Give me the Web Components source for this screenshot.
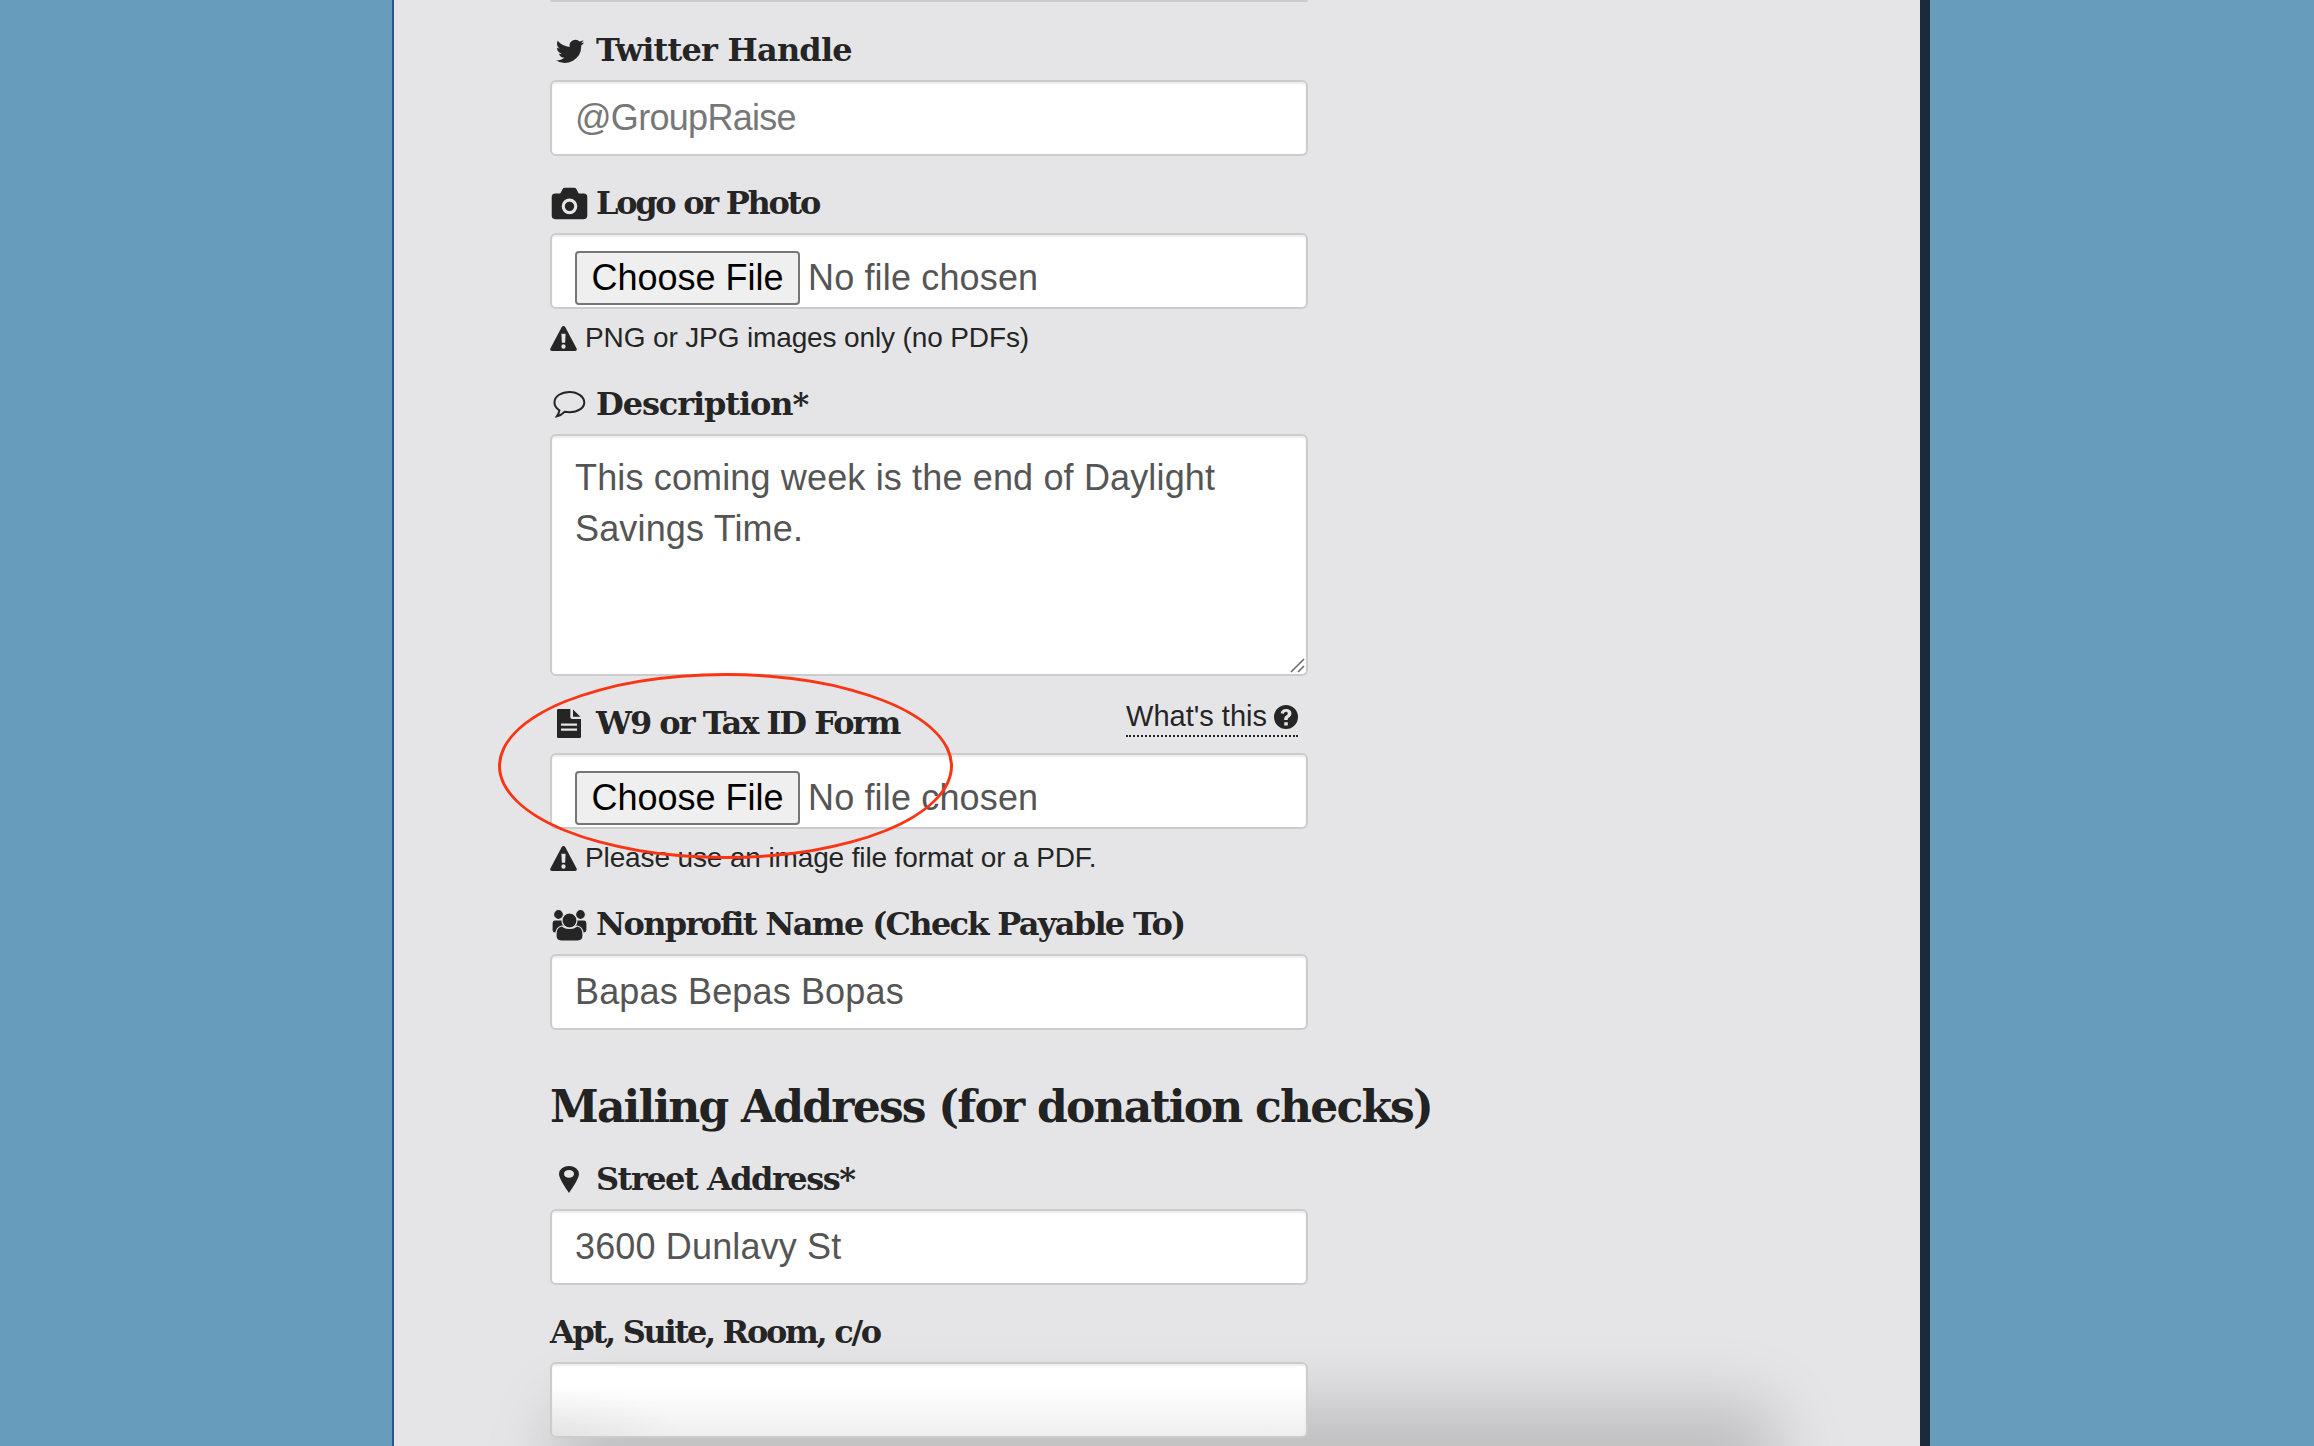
<!DOCTYPE html>
<html>
<head>
<meta charset="utf-8">
<style>
	html, body { margin: 0; height: 100%; overflow: hidden; background: #689cbd; }
</style>
</head>
<body>
<page-shell>
	<form-stub></form-stub>
	<form-field icon="twitter" track="-.8" label="Twitter Handle"><text-box placeholder="@GroupRaise"></text-box></form-field>
	<form-field icon="camera" track="-2.3" label="Logo or Photo" note="PNG or JPG images only (no PDFs)"><file-box></file-box></form-field>
	<form-field icon="comment" track="-1.1" label="Description*"><area-box value="This coming week is the end of Daylight Savings Time."></area-box></form-field>
	<form-field icon="file" track="-2" label="W9 or Tax ID Form" help="What's this" note="Please use an image file format or a PDF."><file-box></file-box></form-field>
	<form-field icon="group" track="-1.7" label="Nonprofit Name (Check Payable To)"><text-box value="Bapas Bepas Bopas"></text-box></form-field>
	<section-title>Mailing Address (for donation checks)</section-title>
	<form-field icon="pin" track="-1.5" label="Street Address*"><text-box value="3600 Dunlavy St"></text-box></form-field>
	<form-field track="-2.3" label="Apt, Suite, Room, c/o"><text-box shaded></text-box></form-field>
</page-shell>

<script>
{
	const ICONS = {
		twitter: `<svg viewBox="0 0 24 22" width="31" height="28"><path fill="#252525" d="M23.500 4.300c-.8.4-1.700.6-2.600.7.900-.6 1.700-1.400 2-2.500-.9.500-1.900.9-2.900 1.100A4.600 4.600 0 0 0 12.200 7.800C8.400 7.600 5 5.800 2.800 3c-1.200 2.100-.6 4.800 1.400 6.100-.7 0-1.400-.2-2.100-.6 0 2.200 1.600 4.100 3.700 4.600-.7.200-1.400.2-2.100.1.600 1.900 2.300 3.200 4.300 3.200A9.300 9.300 0 0 1 1.200 18.300 13 13 0 0 0 21.200 6.700c.9-.6 1.700-1.500 2.300-2.400z"/></svg>`,
		camera: `<svg viewBox="0 0 26 24" width="37" height="35"><path fill="#252525" fill-rule="evenodd" d="M3 5h3.500l1.700-3.200Q8.700 1 9.600 1h6.800q.9 0 1.400.8L19.500 5H23a2.500 2.500 0 0 1 2.500 2.500v13A2.500 2.500 0 0 1 23 23H3a2.500 2.500 0 0 1-2.500-2.500v-13A2.500 2.500 0 0 1 3 5zm10 3.500a5.500 5.500 0 1 0 0 11 5.500 5.500 0 0 0 0-11zm0 2.200a3.300 3.300 0 1 1 0 6.600 3.300 3.300 0 0 1 0-6.600z"/></svg>`,
		comment: `<svg viewBox="0 0 24 22" width="36" height="32"><path fill="none" stroke="#252525" stroke-width="1.400" d="M12.500 2C7 2 2 4.800 2 9.300c0 2.300 1.400 4.100 3.400 5.400-.2 1.500-1 3-1.700 4 2-.4 3.900-1.600 5.200-3 1.200.2 2.400.3 3.600.3 5.500 0 10-2.900 10-6.700S18 2 12.500 2z"/></svg>`,
		file: `<svg viewBox="1 1 18 26" width="24" height="29" preserveAspectRatio="none"><path fill="#252525" fill-rule="evenodd" d="M2 1h9v7.500a1.500 1.500 0 0 0 1.500 1.500H19v16a1 1 0 0 1-1 1H2a1 1 0 0 1-1-1V2a1 1 0 0 1 1-1zm11 .5L18.500 8H13zM4 14v2h12v-2zm0 4.500v2h12v-2z"/></svg>`,
		group: `<svg viewBox="0 0 35 32" width="35" height="32"><g fill="#252525" stroke="#e5e5e7" stroke-width="1.200"><circle cx="6.500" cy="5.500" r="5"/><circle cx="28.500" cy="5.500" r="5"/><path d="M3 11h8l2 8-8 5H3Q0 24 0 21v-6q0-4 3-4zM32 11h-8l-2 8 8 5h2q3 0 3-3v-6q0-4-3-4z"/><circle cx="17.500" cy="11.500" r="7.500"/><path d="M4 25q0-7 6-8 3 2.500 7.500 2.500T25 17q6 1 6 8v2q0 5-5 5H9q-5 0-5-5z"/></g></svg>`,
		pin: `<svg viewBox="1 1 14 24" width="20" height="27" preserveAspectRatio="none"><path fill="#252525" fill-rule="evenodd" d="M8 1a7 7 0 0 1 7 7c0 4-4.500 12-7 17C5.500 20 1 12 1 8a7 7 0 0 1 7-7zm0 3.500a3.500 3.500 0 1 0 0 7 3.500 3.500 0 0 0 0-7z"/></svg>`,
		warning: `<svg viewBox="0 0 28 24" width="27" height="25" preserveAspectRatio="none"><path fill="#252525" fill-rule="evenodd" d="M14 0c.8 0 1.400.4 1.800 1l11.800 20.500c.7 1.200-.2 2.500-1.600 2.500H2c-1.400 0-2.300-1.300-1.600-2.500L12.200 1c.4-.6 1-1 1.800-1zm-2.200 7.500.5 8.500h3.400l.5-8.500zM14 17.500a2.200 2.200 0 1 0 0 4.400 2.200 2.200 0 0 0 0-4.400z"/></svg>`,
		help: `<svg viewBox="0 0 24 24" width="24" height="24"><path fill="#252525" fill-rule="evenodd" d="M12 0a12 12 0 1 1 0 24 12 12 0 0 1 0-24zm-1.800 17.200v3.200h3.600v-3.200zM12 4c-3 0-5 1.700-5.300 4.200l3.200.6c.2-1.200 1-2 2-2 1.100 0 1.900.7 1.900 1.600 0 .8-.5 1.300-1.500 2-1.500 1-2.100 2-2.100 3.500v1h3.500v-.6c0-.8.300-1.200 1.300-1.900 1.500-1 2.400-2 2.400-3.900C17.400 5.700 15.300 4 12 4z"/></svg>`
	};

	class PageShell extends HTMLElement {
		constructor(){
			super();
			this.attachShadow({ mode: "open" });
			this.shadowRoot.innerHTML = `
				<style>
					:host { display: block; position: relative; height: 1446px; overflow: hidden; background: #689cbd; }
					#panel {
						box-sizing: border-box;
						width: 1538px;
						height: 1446px;
						margin-left: 392px;
						padding: 0 0 0 156px;
						background: #e5e5e7;
						border-left: 2px solid #2c5a86;
						border-right: 10px solid #1b2b3a;
						position: relative;
						overflow: hidden;
					}
					/* soft shadow coming from a window below the fold */
					#shade {
						position: absolute;
						left: 160px;
						width: 1225px;
						bottom: -70px;
						height: 115px;
						border-radius: 40px;
						background: rgba(0,0,0,.16);
						filter: blur(32px);
					}
					#ring {
						position: absolute;
						left: 104px;
						top: 673px;
						width: 455px;
						height: 186px;
						box-sizing: border-box;
						border: 3px solid #fb3514;
						border-radius: 50%;
					}
					#content { position: relative; }
				</style>
				<div id="panel">
					<div id="shade"></div>
					<div id="content"><slot></slot></div>
					<div id="ring"></div>
				</div>
			`;
		}
	}
	customElements.define("page-shell", PageShell);

	//bottom edge of the input that is scrolled off the top
	class FormStub extends HTMLElement {
		constructor(){
			super();
			this.attachShadow({ mode: "open" });
			this.shadowRoot.innerHTML = `
				<style>
					:host { display: block; width: 758px; height: 2px; margin-bottom: 25px; background: #ccc; border-radius: 0 0 6px 6px; }
				</style>
			`;
		}
	}
	customElements.define("form-stub", FormStub);

	class FormField extends HTMLElement {
		constructor(){
			super();
			this.attachShadow({ mode: "open" });
		}
		connectedCallback(){
			const label = this.getAttribute("label");
			const icon = this.getAttribute("icon");
			const note = this.getAttribute("note");
			const help = this.getAttribute("help");
			const track = this.getAttribute("track") || "-1.5";
			this.shadowRoot.innerHTML = `
				<style>
					:host { display: block; width: 758px; margin-bottom: 24px; }
					:host([note]) { margin-bottom: 22px; }
					#head { display: flex; align-items: center; height: 47px; margin-bottom: 6px; position: relative; }
					#icon { display: flex; width: 46px; flex: none; align-items: center; justify-content: center; padding-right: 8px; box-sizing: border-box; }
					label {
						font: bold 32px/47px "DejaVu Serif", serif;
						letter-spacing: ${track}px;
						color: #252525;
						white-space: nowrap;
					}
					a {
						margin-left: auto;
						margin-right: 10px;
						display: flex;
						align-items: center;
						gap: 7px;
						font: 29px/37px "Liberation Sans", Arial, sans-serif;
						color: #252525;
						border-bottom: 2px dotted #252525;
						position: relative;
						top: -6px;
					}
					#note {
						display: flex;
						align-items: center;
						gap: 8px;
						height: 42px;
						margin-top: 8px;
						font: 28px/42px "Liberation Sans", Arial, sans-serif;
						letter-spacing: -.13px;
						color: #252525;
					}
				</style>
				<div id="head">
					${icon ? `<span id="icon">${ICONS[icon]}</span>` : ""}
					<label>${label}</label>
					${help ? `<a>${help} ${ICONS.help}</a>` : ""}
				</div>
				<slot></slot>
				${note ? `<div id="note">${ICONS.warning}<span>${note}</span></div>` : ""}
			`;
		}
	}
	customElements.define("form-field", FormField);

	const BOX_CSS = `
		box-sizing: border-box;
		width: 758px;
		background: #fff;
		border: 2px solid #cccccc;
		border-radius: 6px;
		box-shadow: inset 0 2px 2px rgba(0,0,0,.075);
		font: 36px/50px "Liberation Sans", Arial, sans-serif;
		letter-spacing: .15px;
		color: #555;
	`;

	class TextBox extends HTMLElement {
		constructor(){
			super();
			this.attachShadow({ mode: "open" });
		}
		connectedCallback(){
			const value = this.getAttribute("value") || "";
			const placeholder = this.getAttribute("placeholder") || "";
			this.shadowRoot.innerHTML = `
				<style>
					:host { display: block; }
					#box { ${BOX_CSS} height: 76px; padding: 11px 23px; white-space: nowrap; }
					:host([shaded]) #box {
						background: radial-gradient(130px 50px at 0 100%, rgba(0,0,0,.05), transparent), linear-gradient(#fff 30%, #efefef);
					}
					.ph { color: #777; letter-spacing: -.7px; }
				</style>
				<div id="box">${value || `<span class="ph">${placeholder}</span>`}</div>
			`;
		}
	}
	customElements.define("text-box", TextBox);

	class FileBox extends HTMLElement {
		constructor(){
			super();
			this.attachShadow({ mode: "open" });
			this.shadowRoot.innerHTML = `
				<style>
					:host { display: block; }
					#box { ${BOX_CSS} height: 76px; padding: 16px 23px 0; display: flex; align-items: flex-start; gap: 8px; overflow: hidden; white-space: nowrap; }
					button {
						box-sizing: border-box;
						width: 225px;
						height: 54px;
						padding: 0;
						background: #efefef;
						border: 2px solid #767676;
						border-radius: 4px;
						font: 36px/50px "Liberation Sans", Arial, sans-serif;
						color: #000;
					}
					span { line-height: 54px; }
				</style>
				<div id="box"><button type="button">Choose File</button><span>No file chosen</span></div>
			`;
		}
	}
	customElements.define("file-box", FileBox);

	class AreaBox extends HTMLElement {
		constructor(){
			super();
			this.attachShadow({ mode: "open" });
		}
		connectedCallback(){
			this.shadowRoot.innerHTML = `
				<style>
					:host { display: block; }
					#box { ${BOX_CSS} height: 242px; padding: 16px 23px 0; position: relative; line-height: 51px; }
					svg { position: absolute; right: 0; bottom: 0; }
				</style>
				<div id="box">${this.getAttribute("value")}
					<svg width="18" height="18" viewBox="0 0 18 18"><path d="M16 3 3 16M16 10l-6 6" stroke="#666" stroke-width="1.500" fill="none"/></svg>
				</div>
			`;
		}
	}
	customElements.define("area-box", AreaBox);

	class SectionTitle extends HTMLElement {
		constructor(){
			super();
			this.attachShadow({ mode: "open" });
			this.shadowRoot.innerHTML = `
				<style>
					:host {
						display: block;
						white-space: nowrap;
						font: bold 44px/66px "DejaVu Serif", serif;
						letter-spacing: -1.8px;
						color: #222;
						margin: 44px 0 16px;
					}
				</style>
				<slot></slot>
			`;
		}
	}
	customElements.define("section-title", SectionTitle);
}
</script>
</body>
</html>
